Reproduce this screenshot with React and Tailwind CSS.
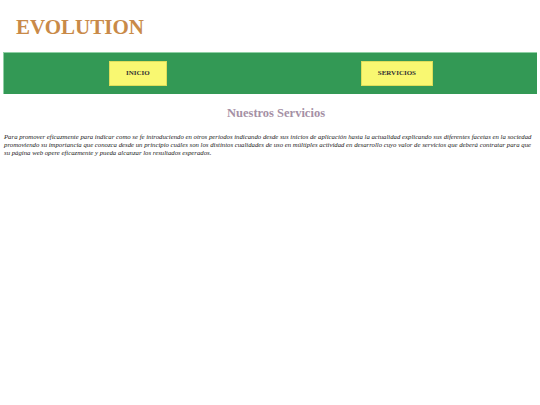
import React from "react";

const serif = { fontFamily: '"Liberation Serif", "Times New Roman", serif' };

const NavButton = ({ children, className = "" }) => {
	return (
		<a
			href="#"
			className={
				"flex h-[25px] items-center border border-[#dede5a] bg-[#f9f871] px-[16px] text-[7px] font-bold text-[#333] " +
				className
			}
		>
			{children}
		</a>
	);
};

const App = () => {
	return (
		<div className="min-h-screen bg-white text-black" style={serif}>
			<h1 className="pl-[16px] pt-[14px] text-[21px] leading-[26px] font-bold text-[#c98a48]">
				EVOLUTION
			</h1>

			<nav className="mx-[3px] mt-[12px] flex h-[42px] items-center border-t border-l border-[#8fd0a5] bg-[#339955]">
				<NavButton className="ml-[105px]">INICIO</NavButton>
				<NavButton className="ml-[194px]">SERVICIOS</NavButton>
			</nav>

			<h2 className="mt-[11px] pl-[12px] text-center text-[12.5px] leading-[16px] font-bold text-[#a590a5]">
				Nuestros Servicios
			</h2>

			<p className="mt-[12px] px-[4px] text-[6.75px] leading-[8px] italic text-[#222]">
				Para promover eficazmente para indicar como se fe introduciendo en otros periodos indicando desde sus inicios de aplicación hasta la actualidad explicando sus diferentes facetas en la sociedad promoviendo su importancia que conozca desde un principio cuáles son los distintos cualidades de uso en múltiples actividad en desarrollo cuyo valor de servicios que deberá contratar para que su página web opere eficazmente y pueda alcanzar los resultados esperados.
			</p>
		</div>
	);
};

export default App;
